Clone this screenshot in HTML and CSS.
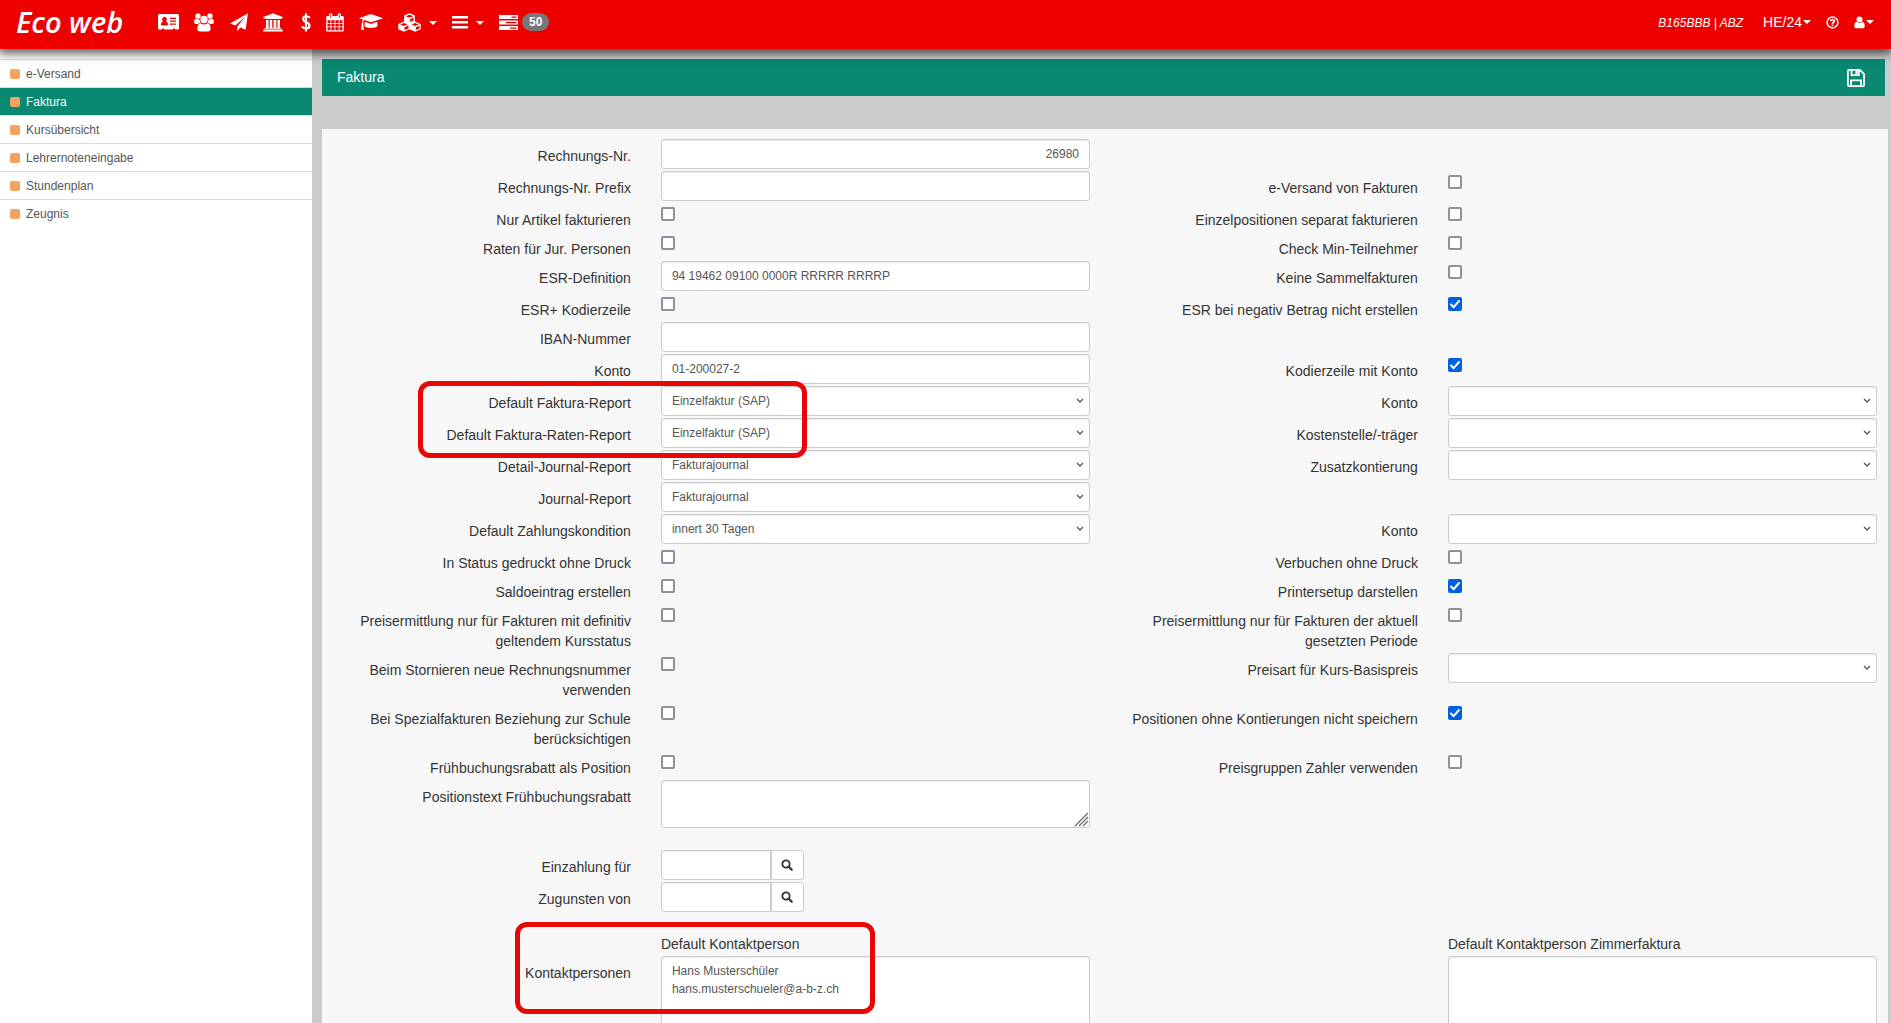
FILE: index.html
```html
<!DOCTYPE html>
<html lang="de">
<head>
<meta charset="utf-8">
<title>Eco web – Faktura</title>
<link rel="stylesheet" href="styles.css">
</head>
<body>
<header class="topbar">
  <a class="brand" href="#">Eco web</a>
  <nav class="tools" aria-label="Module">
    <a class="tool" href="#" aria-label="Adressen"><svg width="21" height="16" viewBox="0 0 21 16"><path fill-rule="evenodd" d="M1.3 0h18.4Q21 0 21 1.3v13q0 1.300-1.300 1.300H17v-1h-2v1H6v-1H4v1H1.300Q0 15.600 0 14.300v-13Q0 0 1.300 0zM6.500 3a2.200 2.400 0 0 0-1.600 4.200Q3 8 3 10.300q0 1.200 1.200 1.200h4.600q1.200 0 1.200-1.200 0-2.300-1.900-3.100A2.200 2.400 0 0 0 6.500 3zM12 3.800V5h6V3.800zM12 6.600v1.200h6V6.600zM12 9.500v1.200h6V9.500z"/></svg></a>
    <a class="tool" href="#" aria-label="Gruppen"><svg width="21" height="19" viewBox="0 0 21 19"><circle cx="4" cy="3" r="2.700"/><circle cx="16" cy="3" r="2.700"/><circle cx="10" cy="6.500" r="3.700"/><path d="M1.800 5.500Q3.800 7 5.500 6.200 5.300 8.300 6.700 9.800 5 9.900 4.200 11H2Q0 11 0 9.200 0 6 1.800 5.500zM18.200 5.500Q16.200 7 14.500 6.200q.2 2.100-1.200 3.600 1.700.1 2.500 1.200H18q2 0 2-1.800Q20 6 18.200 5.500zM6.500 10.200Q10 12.700 13.500 10.200 16.600 10.500 16.600 15.800q0 2.700-2.600 2.700H6q-2.600 0-2.600-2.700 0-5.300 3.100-5.600z"/></svg></a>
    <a class="tool" href="#" aria-label="Versand"><svg width="18" height="19" viewBox="0 0 18 19"><path d="M18 .3 15.600 16.700 10.300 14.600 7.300 18.500V13.400L15.300 3.600 5.300 12.400 0 10.400z"/></svg></a>
    <a class="tool" href="#" aria-label="Bank"><svg width="21" height="19" viewBox="0 0 21 19"><path d="M10 .3 19.700 4v1.300h-1.300q0 .7-.7.700H2.300q-.7 0-.7-.7H.3V4zM3 7h2.500v7.800h1.200V7h2.600v7.800h1.400V7h2.600v7.800h1.200V7H17v7.800h.7q.7 0 .7.900H1.600q0-.9.700-.9H3zM.900 16.400h18.200q.7 0 .7.700v1.300H.200v-1.300q0-.7.700-.7z"/></svg></a>
    <a class="tool" href="#" aria-label="Finanzen"><svg width="12" height="19" viewBox="-2 0 12 19"><path d="M5 .3v18.200M8.900 4.800Q7.200 3.300 5 3.300 2.100 3.300 2.100 5.700 2.100 7.800 5 8.900 8.500 10.300 8.500 12.700 8.500 15.500 5 15.500 2.700 15.500.800 13.500" fill="none" stroke="currentColor" stroke-width="2.100"/></svg></a>
    <a class="tool" href="#" aria-label="Kalender"><svg width="18" height="19" viewBox="0 0 18 19"><path fill-rule="evenodd" d="M1.500 3H3V1.800Q3 .3 4.700.3t1.700 1.500V3h5.200V1.800Q11.600.3 13.300.3T15 1.800V3h1.500q1.300 0 1.300 1.300v12.900q0 1.300-1.300 1.300h-15Q.2 18.500.2 17.200V4.300Q.2 3 1.500 3zM4.300 1.500v3.400h.8V1.500zM12.900 1.500v3.400h.8V1.500zM1.500 7.200V10h3V7.200zM5.300 7.200V10h3.300V7.200zM9.400 7.200V10h3.300V7.200zM13.500 7.200V10h3V7.200zM1.500 10.800v2.700h3v-2.700zM5.300 10.800v2.700h3.300v-2.700zM9.400 10.800v2.700h3.300v-2.700zM13.500 10.800v2.700h3v-2.700zM1.500 14.300v2.900h3v-2.900zM5.300 14.300v2.900h3.300v-2.900zM9.400 14.300v2.900h3.300v-2.900zM13.500 14.300v2.900h3v-2.900z"/></svg></a>
    <a class="tool" href="#" aria-label="Kurse"><svg width="24" height="16" viewBox="0 0 24 16"><path d="M12 0 23.500 3.900v.6L12 8.300 5.200 6Q4.100 7 4 9q.9.600.3 1.700L5 15.700H2l.7-5q-.6-1.200.3-1.700.1-2.200 1-3.400L.5 4.500v-.6zM18.200 7.800l.3 3.500q0 2.700-6.500 2.700t-6.500-2.700l.3-3.500L12 9.900z"/></svg></a>
    <a class="tool" href="#" aria-label="Artikel"><svg width="23" height="19" viewBox="0 0 23 19"><path fill-rule="evenodd" d="M11.500.3 16.900 2.500V8.500L22.700 11v5.300L17.200 18.700 11.500 16.200 5.800 18.700.3 16.300V11L6.100 8.500V2.500zM11.500 1.700 7.800 3.200 11.500 4.800 15.200 3.200zM12.200 6.100V9L15.600 7.600V4.700zM5.800 9.900 2.200 11.400 5.800 13 9.400 11.400zM17.200 9.900 13.600 11.400 17.200 13 20.800 11.400zM6.500 14.200v2.900L10.500 15.400V12.500zM17.900 14.200v2.900L21.500 15.600V12.700z"/></svg><span class="caret caret-gap"></span></a>
    <a class="tool" href="#" aria-label="Listen"><svg width="16" height="14" viewBox="0 0 16 14"><path d="M0 1h16v2.500H0zM0 6h16v2.500H0zM0 11h16v2.500H0z"/></svg><span class="caret caret-gap"></span></a>
    <a class="tool" href="#" aria-label="Aufgaben"><svg width="19" height="15" viewBox="0 0 19 15"><path fill-rule="evenodd" d="M0 0h19v4H0zM0 5.500h19v4H0zM0 11h19v4H0zM12.500 1.400v1.300h5V1.400zM7 6.900v1.300h10.500V6.900zM11 12.400v1.300h6.500v-1.300z"/></svg><span class="badge">50</span></a>
  </nav>
  <div class="account">
    <span class="client">B165BBB | ABZ</span>
    <a class="period" href="#">HE/24<span class="caret"></span></a>
    <a class="help" href="#" aria-label="Hilfe"><svg width="13" height="13" viewBox="0 0 13 13"><g fill="none" stroke="currentColor" stroke-width="1.500"><circle cx="6.500" cy="6.500" r="5.400"/><path d="M4.600 5.100Q4.800 3.700 6.500 3.700 8.300 3.700 8.300 5.100 8.300 5.900 7.400 6.400 6.500 6.900 6.500 7.800" stroke-width="1.700"/></g><path d="M5.600 8.600h1.800v1.500H5.600z"/></svg></a>
    <a class="user" href="#" aria-label="Benutzer"><svg width="11" height="13" viewBox="0 0 11 13"><circle cx="5.500" cy="3.600" r="3"/><path d="M2.600 5.700Q5.500 8.300 8.400 5.700 10.700 6 10.700 10.300 10.700 12.300 9 12.300H2Q.3 12.300.3 10.300.3 6 2.600 5.700z"/></svg><span class="caret"></span></a>
  </div>
</header>

<div class="shell">
  <nav class="sidebar" aria-label="Einstellungen">
    <a class="side-link" href="#">e-Versand</a>
    <a class="side-link active" href="#">Faktura</a>
    <a class="side-link" href="#">Kursübersicht</a>
    <a class="side-link" href="#">Lehrernoteneingabe</a>
    <a class="side-link" href="#">Stundenplan</a>
    <a class="side-link" href="#">Zeugnis</a>
  </nav>

  <main class="content">
    <div class="titlebar">
      <h1 class="title">Faktura</h1>
      <button class="save" type="button" aria-label="Speichern"><svg width="18" height="18" viewBox="0 0 18 18"><path fill="none" stroke="currentColor" stroke-width="1.800" d="M1.900.9H12.800L17.100 5.200v10.900q0 1-1 1H1.900q-1 0-1-1V1.900q0-1 1-1zM4.500 1v5.200h7.300V1M4 17v-5.700h10V17"/><path d="M8.400 1.500h2.200v3.800H8.400z"/></svg></button>
    </div>

    <form class="panel">
      <div class="row">
        <label class="label" for="nr">Rechnungs-Nr.</label>
        <div class="cell"><input class="control number" id="nr" type="text" value="26980"></div>
      </div>
      <div class="row">
        <label class="label" for="prefix">Rechnungs-Nr. Prefix</label>
        <div class="cell"><input class="control" id="prefix" type="text"></div>
        <label class="label" for="eversand">e-Versand von Fakturen</label>
        <div class="cell"><input class="check" id="eversand" type="checkbox"></div>
      </div>
      <div class="row">
        <label class="label" for="artikel">Nur Artikel fakturieren</label>
        <div class="cell"><input class="check" id="artikel" type="checkbox"></div>
        <label class="label" for="einzel">Einzelpositionen separat fakturieren</label>
        <div class="cell"><input class="check" id="einzel" type="checkbox"></div>
      </div>
      <div class="row">
        <label class="label" for="raten">Raten für Jur. Personen</label>
        <div class="cell"><input class="check" id="raten" type="checkbox"></div>
        <label class="label" for="minteil">Check Min-Teilnehmer</label>
        <div class="cell"><input class="check" id="minteil" type="checkbox"></div>
      </div>
      <div class="row">
        <label class="label" for="esr">ESR-Definition</label>
        <div class="cell"><input class="control" id="esr" type="text" value="94 19462 09100 0000R RRRRR RRRRP"></div>
        <label class="label" for="sammel">Keine Sammelfakturen</label>
        <div class="cell"><input class="check" id="sammel" type="checkbox"></div>
      </div>
      <div class="row">
        <label class="label" for="esrplus">ESR+ Kodierzeile</label>
        <div class="cell"><input class="check" id="esrplus" type="checkbox"></div>
        <label class="label" for="esrneg">ESR bei negativ Betrag nicht erstellen</label>
        <div class="cell"><input class="check" id="esrneg" type="checkbox" checked></div>
      </div>
      <div class="row">
        <label class="label" for="iban">IBAN-Nummer</label>
        <div class="cell"><input class="control" id="iban" type="text"></div>
      </div>
      <div class="row">
        <label class="label" for="konto">Konto</label>
        <div class="cell"><input class="control" id="konto" type="text" value="01-200027-2"></div>
        <label class="label" for="kodier">Kodierzeile mit Konto</label>
        <div class="cell"><input class="check" id="kodier" type="checkbox" checked></div>
      </div>
      <div class="marked">
        <div class="row">
          <label class="label" for="report">Default Faktura-Report</label>
          <div class="cell"><select class="control" id="report"><option>Einzelfaktur (SAP)</option></select></div>
          <label class="label" for="konto2">Konto</label>
          <div class="cell"><select class="control" id="konto2"><option></option></select></div>
        </div>
        <div class="row">
          <label class="label" for="ratenreport">Default Faktura-Raten-Report</label>
          <div class="cell"><select class="control" id="ratenreport"><option>Einzelfaktur (SAP)</option></select></div>
          <label class="label" for="kosten">Kostenstelle/-träger</label>
          <div class="cell"><select class="control" id="kosten"><option></option></select></div>
        </div>
        <div class="marker marker-reports"></div>
      </div>
      <div class="row">
        <label class="label" for="detail">Detail-Journal-Report</label>
        <div class="cell"><select class="control" id="detail"><option>Fakturajournal</option></select></div>
        <label class="label" for="zusatz">Zusatzkontierung</label>
        <div class="cell"><select class="control" id="zusatz"><option></option></select></div>
      </div>
      <div class="row">
        <label class="label" for="journal">Journal-Report</label>
        <div class="cell"><select class="control" id="journal"><option>Fakturajournal</option></select></div>
      </div>
      <div class="row">
        <label class="label" for="zahlung">Default Zahlungskondition</label>
        <div class="cell"><select class="control" id="zahlung"><option>innert 30 Tagen</option></select></div>
        <label class="label" for="konto3">Konto</label>
        <div class="cell"><select class="control" id="konto3"><option></option></select></div>
      </div>
      <div class="row">
        <label class="label" for="status">In Status gedruckt ohne Druck</label>
        <div class="cell"><input class="check" id="status" type="checkbox"></div>
        <label class="label" for="verbuchen">Verbuchen ohne Druck</label>
        <div class="cell"><input class="check" id="verbuchen" type="checkbox"></div>
      </div>
      <div class="row">
        <label class="label" for="saldo">Saldoeintrag erstellen</label>
        <div class="cell"><input class="check" id="saldo" type="checkbox"></div>
        <label class="label" for="printer">Printersetup darstellen</label>
        <div class="cell"><input class="check" id="printer" type="checkbox" checked></div>
      </div>
      <div class="row">
        <label class="label" for="definitiv">Preisermittlung nur für Fakturen mit definitiv geltendem Kursstatus</label>
        <div class="cell"><input class="check" id="definitiv" type="checkbox"></div>
        <label class="label" for="periode">Preisermittlung nur für Fakturen der aktuell gesetzten Periode</label>
        <div class="cell"><input class="check" id="periode" type="checkbox"></div>
      </div>
      <div class="row">
        <label class="label" for="storno">Beim Stornieren neue Rechnungsnummer verwenden</label>
        <div class="cell"><input class="check" id="storno" type="checkbox"></div>
        <label class="label" for="preisart">Preisart für Kurs-Basispreis</label>
        <div class="cell"><select class="control" id="preisart"><option></option></select></div>
      </div>
      <div class="row">
        <label class="label" for="spezial">Bei Spezialfakturen Beziehung zur Schule berücksichtigen</label>
        <div class="cell"><input class="check" id="spezial" type="checkbox"></div>
        <label class="label" for="positionen">Positionen ohne Kontierungen nicht speichern</label>
        <div class="cell"><input class="check" id="positionen" type="checkbox" checked></div>
      </div>
      <div class="row">
        <label class="label" for="rabatt">Frühbuchungsrabatt als Position</label>
        <div class="cell"><input class="check" id="rabatt" type="checkbox"></div>
        <label class="label" for="gruppen">Preisgruppen Zahler verwenden</label>
        <div class="cell"><input class="check" id="gruppen" type="checkbox"></div>
      </div>
      <div class="row">
        <label class="label" for="postext">Positionstext Frühbuchungsrabatt</label>
        <div class="cell"><textarea class="control area" id="postext"></textarea></div>
      </div>
      <div class="row section">
        <label class="label" for="einzahlung">Einzahlung für</label>
        <div class="cell lookup"><input class="control" id="einzahlung" type="text"><button class="find" type="button" aria-label="Suchen"><svg width="12" height="12" viewBox="0 0 12 12"><circle cx="5" cy="5" r="3.700" fill="none" stroke="currentColor" stroke-width="1.800"/><path d="M7.600 7.600 10.700 10.700" stroke="currentColor" stroke-width="2.200" stroke-linecap="round"/></svg></button></div>
      </div>
      <div class="row">
        <label class="label" for="zugunsten">Zugunsten von</label>
        <div class="cell lookup"><input class="control" id="zugunsten" type="text"><button class="find" type="button" aria-label="Suchen"><svg width="12" height="12" viewBox="0 0 12 12"><circle cx="5" cy="5" r="3.700" fill="none" stroke="currentColor" stroke-width="1.800"/><path d="M7.600 7.600 10.700 10.700" stroke="currentColor" stroke-width="2.200" stroke-linecap="round"/></svg></button></div>
      </div>
      <div class="marked section">
        <div class="row">
          <label class="caption caption-left" for="kontakt">Default Kontaktperson</label>
          <label class="caption caption-right" for="zimmer">Default Kontaktperson Zimmerfaktura</label>
        </div>
        <div class="row">
          <span class="label">Kontaktpersonen</span>
          <div class="cell"><textarea class="control area area-tall" id="kontakt">Hans Musterschüler
hans.musterschueler@a-b-z.ch</textarea></div>
          <span class="label"></span>
          <div class="cell"><textarea class="control area area-tall" id="zimmer"></textarea></div>
        </div>
        <div class="marker marker-contact"></div>
      </div>
    </form>
  </main>
</div>
</body>
</html>
```
FILE: styles.css
```css
* {
  box-sizing: border-box;
}

body {
  display: flex;
  flex-direction: column;
  height: 100vh;
  margin: 0;
  overflow: hidden;
  background: #ccc;
  color: #333;
  font: 14px/20px "Liberation Sans", Arial, sans-serif;
}

a {
  color: inherit;
  text-decoration: none;
}

svg {
  display: block;
  flex: none;
  fill: currentColor;
}

/* Top bar */
.topbar {
  position: relative;
  z-index: 2;
  display: flex;
  flex: none;
  align-items: center;
  height: 49px;
  padding: 0 17px 5px 16px;
  background: #e00;
  box-shadow: 0 2px 10px 2px rgba(0, 0, 0, .7);
  color: #fff;
}

.brand {
  width: 142px;
  font: italic 600 29px/44px "Open Sans", "Noto Sans", sans-serif;
  white-space: nowrap;
}

.tools {
  display: flex;
  align-items: center;
  gap: 15px;
}

.tool {
  display: flex;
  align-items: center;
}

.caret {
  border: 4px solid transparent;
  border-top-color: currentColor;
  border-bottom: 0;
}

.caret-gap {
  margin: 2px 0 0 8px;
}

.badge {
  height: 18px;
  margin-left: 4px;
  padding: 0 7px;
  border-radius: 9px;
  background: #777;
  font-size: 12px;
  font-weight: bold;
  line-height: 18px;
}

.account {
  display: flex;
  align-items: center;
  margin-left: auto;
}

.client {
  margin: 2px 20px 0 0;
  font-size: 12px;
  font-style: italic;
}

.period,
.user {
  display: flex;
  align-items: center;
  gap: 1px;
}

.help {
  margin: 0 15px;
}

/* Side navigation */
.shell {
  display: flex;
  flex: 1;
  min-height: 0;
}

.sidebar {
  flex: none;
  width: 312px;
  padding-top: 10px;
  background: #fff;
}

.side-link {
  display: flex;
  align-items: center;
  gap: 6px;
  height: 28px;
  padding-left: 10px;
  border-top: 1px solid #ddd;
  color: #555;
  font-size: 12px;
}

.side-link::before {
  width: 10px;
  height: 10px;
  border-radius: 2px;
  background: #f4a460;
  content: "";
}

.side-link.active {
  background: #098872;
  color: #fff;
}

/* Content */
.content {
  flex: 1;
  min-width: 0;
  padding: 10px 3px 0 10px;
  overflow-y: auto;
  scrollbar-width: none;
}

.titlebar {
  display: flex;
  align-items: center;
  justify-content: space-between;
  height: 37px;
  margin-right: 3px;
  padding: 0 20px 0 15px;
  background: #098872;
  color: #fff;
}

.title {
  margin: 0;
  padding-bottom: 2px;
  font-size: 14px;
  font-weight: normal;
}

.save {
  padding: 0;
  border: 0;
  background: none;
  color: inherit;
}

.panel {
  margin-top: 33px;
  padding: 10px 0 20px;
  background: #f7f7f7;
}

.row {
  display: grid;
  grid-template-columns: 5fr 7fr 5fr 7fr;
  margin: 0 -4px;
}

.section {
  margin-top: 20px;
}

.label {
  padding: 7px 15px 2px;
  text-align: right;
}

.cell {
  padding: 0 15px 2px;
}

.caption {
  padding: 0 15px 2px;
}

.caption-left {
  grid-column: 2;
}

.caption-right {
  grid-column: 4;
}

.control {
  display: block;
  width: 100%;
  height: 30px;
  margin: 0;
  padding: 5px 10px;
  border: 1px solid #ccc;
  border-radius: 3px;
  background-color: #fff;
  box-shadow: inset 0 1px 1px rgba(0, 0, 0, .08);
  color: #555;
  font: 12px/18px "Liberation Sans", Arial, sans-serif;
}

.number {
  text-align: right;
}

select.control {
  appearance: none;
  background-image: url("data:image/svg+xml,%3Csvg xmlns='http://www.w3.org/2000/svg' width='8' height='6'%3E%3Cpath d='M1 1l3 3 3-3' fill='none' stroke='%23555' stroke-width='1.3'/%3E%3C/svg%3E");
  background-position: right 5px center;
  background-repeat: no-repeat;
}

.area {
  height: 48px;
}

.area-tall {
  height: 120px;
}

.area::-webkit-resizer {
  background: url("data:image/svg+xml,%3Csvg xmlns='http://www.w3.org/2000/svg' width='15' height='15'%3E%3Cpath d='M1 14L14 1M5 14l9-9M9 14l5-5' stroke='%23666' stroke-width='1.2'/%3E%3C/svg%3E") no-repeat right bottom;
}

.check {
  display: block;
  width: 14px;
  height: 14px;
  margin: 4px 0 0;
  border: 2px solid #8f8f9d;
  border-radius: 2px;
  appearance: none;
  background: #fff;
}

.check:checked {
  border: 0;
  background: #0060df url("data:image/svg+xml,%3Csvg xmlns='http://www.w3.org/2000/svg' width='14' height='14'%3E%3Cpath d='M3 7.500l2.700 2.700L11 4' fill='none' stroke='%23fff' stroke-width='2' stroke-linecap='round' stroke-linejoin='round'/%3E%3C/svg%3E");
}

.lookup {
  display: flex;
}

.lookup .control {
  width: 110px;
  border-radius: 3px 0 0 3px;
}

.find {
  display: flex;
  align-items: center;
  justify-content: center;
  width: 33px;
  height: 30px;
  padding: 0;
  border: 1px solid #ccc;
  border-radius: 0 3px 3px 0;
  background: #fff;
  color: #333;
}

/* Highlight frames laid over the form */
.marked {
  position: relative;
}

.marker {
  position: absolute;
  border: 5px solid #e80707;
  border-radius: 12px;
  pointer-events: none;
}

.marker-reports {
  top: -5px;
  left: calc(20.8333% - 230px);
  width: 389px;
  height: 77px;
}

.marker-contact {
  top: -12px;
  left: calc(20.8333% - 133px);
  width: 360px;
  height: 92px;
}
```
